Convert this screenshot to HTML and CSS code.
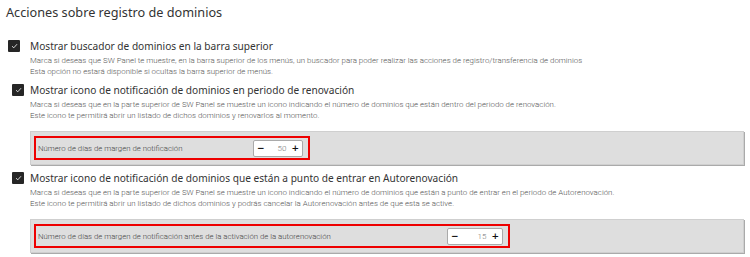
FILE: index.html
```html
<!doctype html>
<html>
<head>
<meta charset="utf-8">
<title>Acciones sobre registro de dominios</title>
<link rel="stylesheet" href="styles.css">
</head>
<body>
	<h2 class="title">Acciones sobre registro de dominios</h2>

	<div class="option first">
		<span class="check"><svg width="7" height="6" viewBox="0 0 7 6"><path d="M1 3.2 L2.8 4.8 L6 1.2" fill="none" stroke="#fff" stroke-width="0.8"/></svg></span>
		<span class="label">Mostrar buscador de dominios en la barra superior</span>
	</div>
	<div class="desc">
		<p>Marca si deseas que SW Panel te muestre, en la barra superior de los menús, un buscador para poder realizar las acciones de registro/transferencia de dominios</p>
		<p>Esta opción no estará disponible si ocultas la barra superior de menús.</p>
	</div>

	<div class="option">
		<span class="check"><svg width="7" height="6" viewBox="0 0 7 6"><path d="M1 3.2 L2.8 4.8 L6 1.2" fill="none" stroke="#fff" stroke-width="0.8"/></svg></span>
		<span class="label">Mostrar icono de notificación de dominios en periodo de renovación</span>
	</div>
	<div class="desc">
		<p>Marca si deseas que en la parte superior de SW Panel se muestre un icono indicando el número de dominios que están dentro del periodo de renovación.</p>
		<p>Este icono te permitirá abrir un listado de dichos dominios y renovarlos al momento.</p>
	</div>
	<div class="panel">
		<div class="field">
			<span class="field-label short">Número de días de margen de notificación</span>
			<span class="spinner"><b>−</b><span class="num">50</span><b>+</b></span>
		</div>
	</div>

	<div class="option">
		<span class="check"><svg width="7" height="6" viewBox="0 0 7 6"><path d="M1 3.2 L2.8 4.8 L6 1.2" fill="none" stroke="#fff" stroke-width="0.8"/></svg></span>
		<span class="label">Mostrar icono de notificación de dominios que están a punto de entrar en Autorenovación</span>
	</div>
	<div class="desc">
		<p>Marca si deseas que en la parte superior de SW Panel se muestre un icono indicando el número de dominios que están a punto de entrar en el periodo de Autorenovación.</p>
		<p>Este icono te permitirá abrir un listado de dichos dominios y podrás cancelar la Autorenovación antes de que esta se active.</p>
	</div>
	<div class="panel">
		<div class="field">
			<span class="field-label long">Número de días de margen de notificación antes de la activación de la autorenovación</span>
			<span class="spinner"><b>−</b><span class="num">15</span><b>+</b></span>
		</div>
	</div>
</body>
</html>
```
FILE: styles.css
```css
*{
	margin:0;
	padding:0;
}
body{
	background:#fff;
	font-family:"Noto Sans",sans-serif;
	color:#333;
	padding:0 6px;
}
.title{
	font-size:12.7px;
	font-weight:400;
	line-height:18px;
	padding-top:3px;
	height:36px;
}
.option{
	display:flex;
	align-items:center;
	height:14px;
	padding-left:6px;
}
.option.first{
	padding-left:2px;
}
.check{
	width:12px;
	height:12px;
	background:#262626;
	border-radius:1px;
	display:flex;
	align-items:center;
	justify-content:center;
	margin-right:6px;
}
.option.first .check{
	margin-right:10px;
}
.label{
	font-size:10.15px;
	line-height:14px;
}
.desc{
	padding:2px 0 6px 24px;
	font-family:Roboto,sans-serif;
	font-weight:300;
	font-size:7.9px;
	line-height:11px;
	color:#555;
}
.panel{
	margin:4px 0 6px 24px;
	width:714px;
	height:34px;
	background:#dedede;
	border:1px solid #cfcfcf;
	box-shadow:1px 1px 0 #aaa;
	padding:0 0 0 3px;
	box-sizing:border-box;
	display:flex;
	align-items:center;
}
.field{
	display:flex;
	align-items:center;
	border:2px solid #e00;
	height:24px;
	box-sizing:border-box;
	padding:0 5px 0 2px;
}
.field-label{
	font-family:Roboto,sans-serif;
	font-weight:300;
	font-size:7.8px;
	color:#444;
}
.field-label.short{
	width:215px;
}
.field-label.long{
	width:409px;
}
.spinner{
	display:flex;
	align-items:center;
	width:50px;
	height:17px;
	background:#fff;
	border:1px solid #aaa;
	border-radius:2px;
	box-sizing:border-box;
	padding:0 3px;
	font-family:"DejaVu Sans",sans-serif;
	font-size:9px;
}
.field-label.long + .spinner{
	width:56px;
}
.spinner b{
	color:#111;
}
.num{
	flex:1;
	text-align:right;
	padding-right:5px;
	font-family:Roboto,sans-serif;
	font-weight:300;
	font-size:8px;
	color:#777;
}
```
